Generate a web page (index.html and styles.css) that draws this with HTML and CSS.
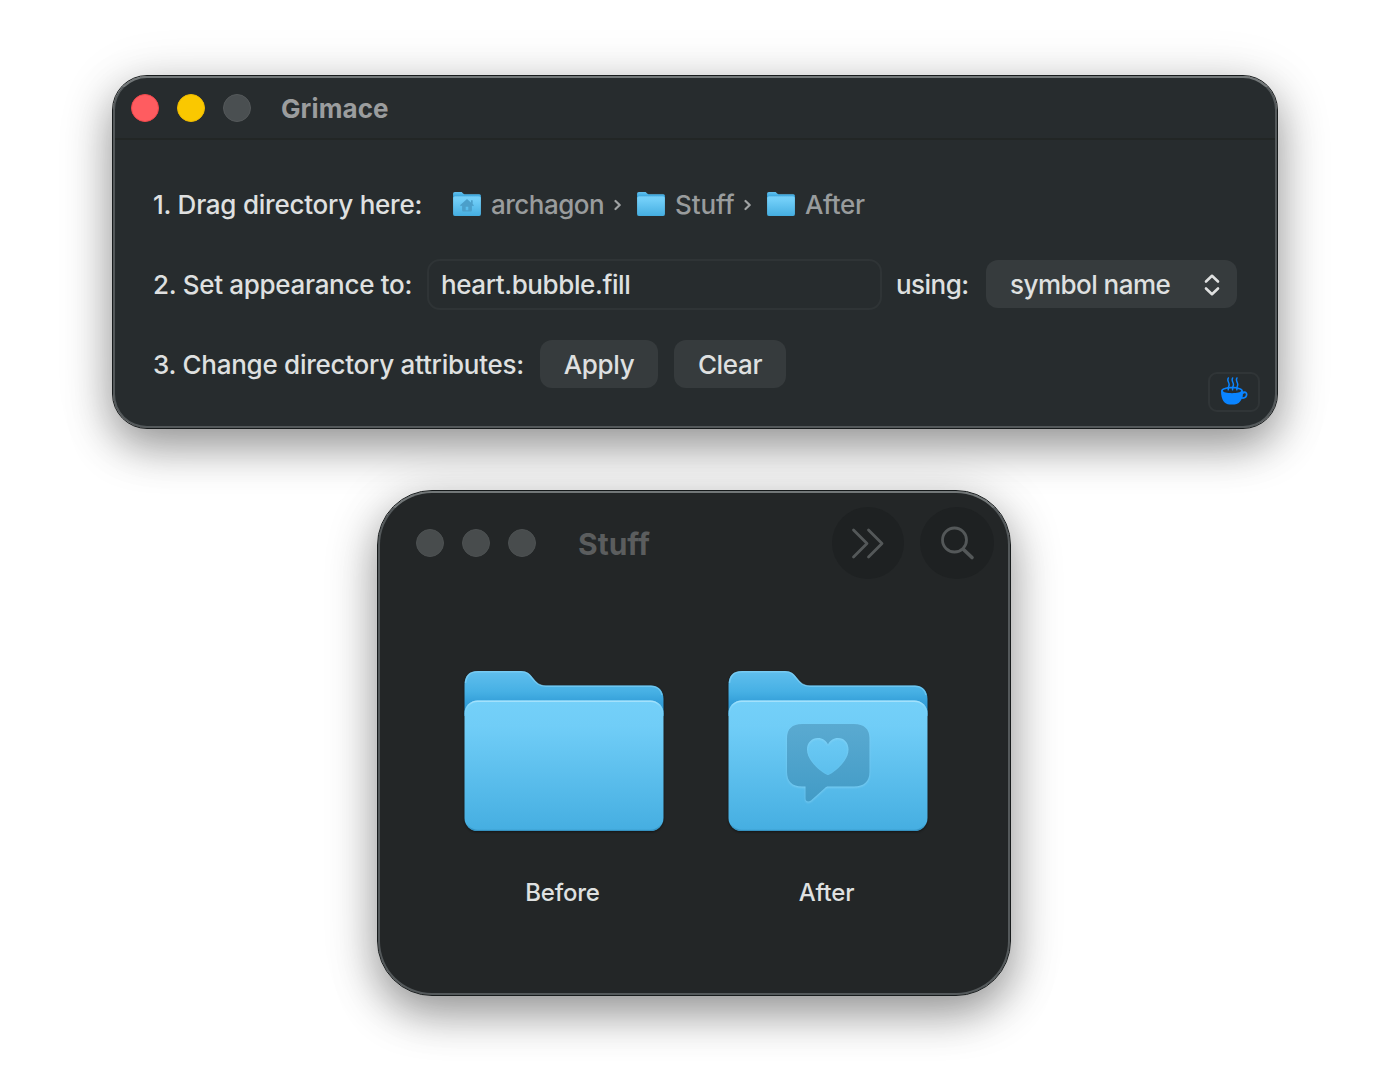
FILE: index.html
```html
<!DOCTYPE html>
<html lang="en">
<head>
<meta charset="utf-8">
<title>Grimace</title>
<link rel="stylesheet" href="styles.css">
</head>
<body>
<svg class="defs" width="0" height="0" aria-hidden="true">
  <defs>
    <linearGradient id="tab" x1="0" y1="0" x2="0" y2="42" gradientUnits="userSpaceOnUse">
      <stop offset="0" stop-color="#60bfee"/><stop offset=".5" stop-color="#46b0e4"/><stop offset=".75" stop-color="#349fd9"/><stop offset="1" stop-color="#2997d3"/>
    </linearGradient>
    <linearGradient id="front" x1="0" y1="0" x2="0" y2="1">
      <stop offset="0" stop-color="#74d0f9"/><stop offset=".2" stop-color="#70cdf7"/><stop offset="1" stop-color="#45aee1"/>
    </linearGradient>
    <linearGradient id="shine" x1="0" y1="0" x2="0" y2="1">
      <stop offset="0" stop-color="#a5e2fc"/><stop offset=".04" stop-color="#8ad8fa" stop-opacity=".6"/><stop offset=".12" stop-color="#8ad8fa" stop-opacity="0"/><stop offset=".95" stop-color="#2d8dbc" stop-opacity="0"/><stop offset="1" stop-color="#3592c1"/>
    </linearGradient>
    <linearGradient id="glyph" x1="0" y1="0" x2="0" y2="1">
      <stop offset="0" stop-color="#5aaad1"/><stop offset="1" stop-color="#429bc6"/>
    </linearGradient>
    <symbol id="folder" viewBox="0 0 200 160" preserveAspectRatio="none">
      <path fill="url(#tab)" d="M.5 45V14C.5 5 5 0 14 0H57C63 0 66 3 69 7C73 12 75 14.500 82 14.500H187C195 14.500 199.500 20 199.500 28V45Z"/>
      <path fill="none" stroke="#8bd5f7" stroke-width="1.500" stroke-opacity=".55" d="M1.500 12C2.500 4 6 .8 14 .8H57C63 .8 65 3 68 7C72 12 75 15.200 82 15.200H187C193 15.200 197 19 198 24"/>
      <rect x=".5" y="29.500" width="199" height="130.500" rx="13" fill="url(#front)"/>
      <rect x="1.100" y="30.200" width="197.800" height="129.200" rx="12.500" fill="none" stroke="url(#shine)" stroke-width="1.500"/>
    </symbol>
  </defs>
</svg>

<main class="desktop">
  <section class="window grimace">
    <header class="titlebar">
      <i class="light red"></i><i class="light yellow"></i><i class="light"></i>
      <h1 class="title">Grimace</h1>
    </header>
    <div class="steps">
      <div class="step">
        <span class="label l1">1. Drag directory here:</span>
        <div class="crumbs">
          <svg class="mini" viewBox="0 0 28 24"><use href="#folder" width="28" height="24"/><path fill="#4b9fca" fill-rule="evenodd" d="M14 7L21 13.200L20 14.300L18.900 13.400V18.500Q18.900 19.500 17.900 19.500H10.100Q9.100 19.500 9.100 18.500V13.400L8 14.300L7 13.200ZM12.700 14.700V18.200H15.300V14.700ZM18 8.300H19.700V12L18 10.500Z"/></svg>
          <span class="crumb c1">archagon</span>
          <svg class="chev" viewBox="0 0 8 14"><path d="M1.500 3L5.700 7L1.500 11"/></svg>
          <svg class="mini" viewBox="0 0 28 24"><use href="#folder" width="28" height="24"/></svg>
          <span class="crumb c2">Stuff</span>
          <svg class="chev" viewBox="0 0 8 14"><path d="M1.500 3L5.700 7L1.500 11"/></svg>
          <svg class="mini" viewBox="0 0 28 24"><use href="#folder" width="28" height="24"/></svg>
          <span class="crumb c3">After</span>
        </div>
      </div>
      <div class="step">
        <span class="label l2">2. Set appearance to:</span>
        <div class="field">heart.bubble.fill</div>
        <span class="label l-using">using:</span>
        <div class="button select">symbol name
          <svg class="updown" viewBox="0 0 16 22"><path d="M2 7.500L8 1.800L14 7.500M2 14.500L8 20.200L14 14.500"/></svg>
        </div>
      </div>
      <div class="step">
        <span class="label l3">3. Change directory attributes:</span>
        <div class="button apply">Apply</div>
        <div class="button clear">Clear</div>
      </div>
    </div>
    <div class="coffee">
      <svg viewBox="0 0 28 28">
        <path fill="#0a84ff" fill-rule="evenodd" d="M1 14C1 11.300 6 9.700 12 9.700S23 11.300 23 14L22.900 14.600C25.500 13.500 27.500 15 27.500 17.500C27.500 20.500 25 22.300 21.800 21.800C20.300 25.300 17.500 27.500 14.500 27.500H9.500C4.500 27.500 1 22.500 1 14ZM2.900 13.800C2.900 15.300 7 16.200 12 16.200S21.100 15.300 21.100 13.800S17 11.400 12 11.400S2.900 12.300 2.900 13.800ZM22.900 17.200C22.900 18.400 22.700 19.400 22.500 20.200C24.400 20.300 25.800 19.200 25.800 17.500C25.800 16 24.300 15.700 22.900 17.200Z"/>
        <path fill="none" stroke="#0a84ff" stroke-width="1.500" stroke-linecap="round" d="M8.300 1C6.500 4.500 10 5.500 9 8.500C8.600 10 8 10.500 8.300 12.800M12.600 1C10.800 4.500 14.300 5.500 13.300 8.500C12.900 10 12.300 10.500 12.600 12.800M16.900 1C15.100 4.500 18.600 5.500 17.600 8.500C17.200 10 16.600 10.500 16.900 12.800"/>
      </svg>
    </div>
  </section>

  <section class="window finder">
    <header class="toolbar">
      <i class="light"></i><i class="light"></i><i class="light"></i>
      <h2 class="title">Stuff</h2>
      <div class="round more"><svg viewBox="0 0 36 36"><path d="M3.500 5L17 18.500L3.500 32M18.500 5L32 18.500L18.500 32"/></svg></div>
      <div class="round search"><svg viewBox="0 0 36 36"><circle cx="15.500" cy="15" r="12"/><path class="handle" d="M24.500 24.500L33 32.500"/></svg></div>
    </header>
    <div class="files">
      <figure class="file">
        <svg class="big" viewBox="0 0 200 160"><use href="#folder" width="200" height="160"/></svg>
        <figcaption>Before</figcaption>
      </figure>
      <figure class="file">
        <svg class="big" viewBox="0 0 200 160"><use href="#folder" width="200" height="160"/>
          <g class="bubble"><path fill="url(#glyph)" fill-rule="evenodd" d="M74 53H126C136 53 141.500 58 141.500 67V101C141.500 110.500 136 115.500 126 115.500H100C98.500 115.500 98 116 97 117L83 129.500C80.500 131.500 77.500 130.500 77.500 127.500V115.500H74C64 115.500 59 110.500 59 101V67C59 58 64 53 74 53ZM100 104C102 104 120.500 92 120.500 78.500C120.500 71.500 116 67 110 67C105.500 67 102 69.500 100 73.500C98 69.500 94.500 67 90 67C84 67 79 71.500 79 78.500C79 92 98 104 100 104Z"/></g>
        </svg>
        <figcaption>After</figcaption>
      </figure>
    </div>
  </section>
</main>
</body>
</html>
```
FILE: styles.css
```css
* { box-sizing: border-box; }
body { margin: 0; background: #fff; color: #dfe0e0; font-family: Inter, "Liberation Sans", sans-serif; font-weight: 450; }
.defs { position: absolute; }
.desktop { display: flex; flex-direction: column; align-items: center; gap: 63px; width: 1388px; height: 1075px; padding-top: 76px; overflow: hidden; }

.window { border: 2px solid #54595b; border-top-color: #737879; outline: 1px solid #171b1c; box-shadow: 0 18px 44px rgba(0,0,0,.36), 0 8px 60px rgba(0,0,0,.14); }
.grimace { position: relative; width: 1164px; height: 352px; margin-left: 2px; border-radius: 34px; background: #272c2e; }
.finder { width: 632px; height: 504px; border-radius: 54px; background: #232627; }

.light { flex: none; width: 28px; height: 28px; border-radius: 50%; background: #4a4f51; border: 1px solid #54585a; }
.red { background: #ff5c60; border-color: #f1474b; }
.yellow { background: #fac800; border-color: #efbb00; }
.titlebar { display: flex; align-items: center; gap: 18px; height: 62px; padding-left: 16px; border-bottom: 2px solid #222625; }
.title { margin: 0; padding-top: 2px; font-weight: 700; line-height: 32px; white-space: nowrap; }
.titlebar .title { padding-left: 12px; font-size: 26px; color: #9b9d9e; letter-spacing: .1px; }

.steps { display: flex; flex-direction: column; gap: 30px; padding: 39px 38px 0; }
.step { display: flex; align-items: center; height: 50px; font-size: 26px; line-height: 32px; letter-spacing: -.36px; white-space: nowrap; }
.label, .crumb { padding-top: 1px; }
.l1 { width: 300px; letter-spacing: -.24px; }
.l2 { width: 274px; letter-spacing: -.3px; }
.l-using { width: 90px; margin-left: 14px; letter-spacing: -.55px; }
.l3 { width: 387px; letter-spacing: -.26px; }
.crumbs { display: flex; align-items: center; color: #999c9d; }
.mini { width: 28px; height: 24px; }
.crumb { margin-left: 10px; }
.c1 { width: 113px; letter-spacing: -.5px; }
.c2 { width: 59px; letter-spacing: -.1px; }
.c3 { letter-spacing: -.3px; }
.chev { width: 8px; height: 14px; margin: 1px 15px 0 10px; fill: none; stroke: #a0a3a4; stroke-width: 2.2; stroke-linecap: round; stroke-linejoin: round; }
.field { display: flex; align-items: center; width: 455px; height: 51px; padding: 1px 0 0 12px; border: 2px solid #2f3436; border-radius: 13px; letter-spacing: -.41px; }
.button { display: flex; align-items: center; justify-content: center; height: 48px; padding-top: 2px; border-radius: 12px; background: #363b3d; }
.select { justify-content: space-between; width: 251px; padding: 2px 17px 0 24px; letter-spacing: -.53px; }
.updown { width: 16px; height: 22px; margin-bottom: 1px; fill: none; stroke: #dfe0e0; stroke-width: 2.6; stroke-linecap: round; stroke-linejoin: round; }
.apply { width: 118px; margin-right: 16px; }
.clear { width: 112px; }
.coffee { position: absolute; right: 15px; bottom: 14px; display: flex; justify-content: center; width: 52px; height: 40px; padding-top: 3px; border: 2px solid #303537; border-radius: 9px; }
.coffee svg { width: 28px; height: 28px; }

.toolbar { display: flex; align-items: center; gap: 18px; height: 100px; padding-left: 36px; }
.toolbar .light { background: #484c4d; border-color: #4d5152; }
.toolbar .title { flex: none; width: 260px; padding: 1px 0 0 24px; font-size: 30px; color: #5b5d5e; }
.round { display: flex; flex: none; align-items: center; justify-content: center; width: 72px; height: 72px; border-radius: 50%; background: #1e2122; }
.round svg { width: 36px; height: 36px; fill: none; stroke: #545859; stroke-width: 2.8; stroke-linecap: round; stroke-linejoin: round; }
.round .handle { stroke-width: 3.6; }
.search { width: 74px; margin-left: -2px; }
.files { display: flex; gap: 64px; padding: 78px 0 0 84px; }
.file { display: flex; flex-direction: column; align-items: center; width: 200px; margin: 0; }
.big { width: 200px; height: 160px; overflow: visible; filter: drop-shadow(0 1px 1px rgba(0,0,0,.45)); }
.bubble { filter: drop-shadow(0 1px 1px rgba(145,216,249,.65)); }
figcaption { margin-top: 47px; padding-right: 3px; font-size: 24px; line-height: 30px; letter-spacing: -.2px; white-space: nowrap; }
```
